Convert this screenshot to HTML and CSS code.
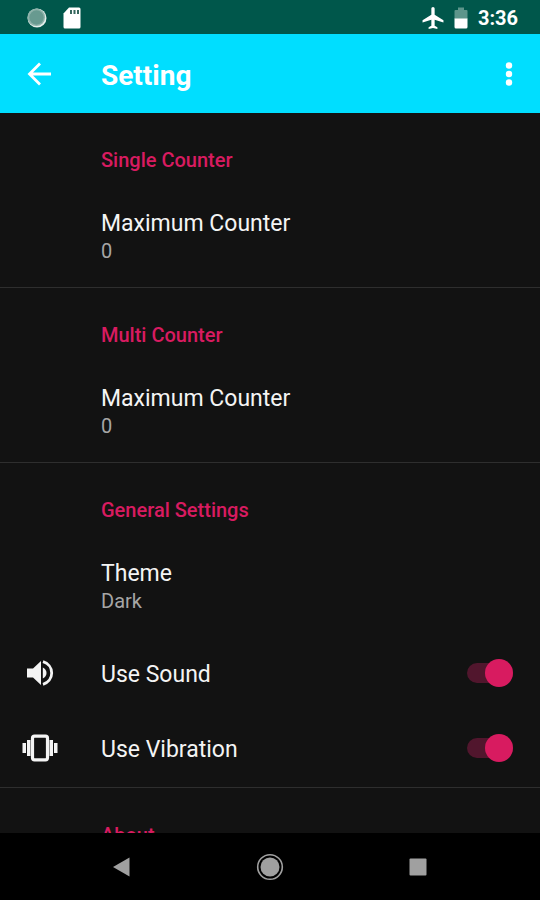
FILE: index.html
```html
<!DOCTYPE html>
<html lang="en">
<head>
<meta charset="utf-8">
<meta name="viewport" content="width=device-width, initial-scale=1">
<title>Setting</title>
<link rel="stylesheet" href="styles.css">
</head>
<body>
<div class="status">
  <svg width="20" height="20" viewBox="0 0 20 20" aria-hidden="true"><circle cx="10" cy="10" r="9.5" fill="#e4f0ed"/><circle cx="9.3" cy="9.3" r="8.8" fill="#8fb3ab"/><circle cx="9.5" cy="9.5" r="7.2" fill="#689a90"/></svg>
  <svg width="18" height="22" viewBox="0 0 18 22" aria-hidden="true"><path d="M6 .5h10a1.500 1.500 0 0 1 1.500 1.500v18a1.500 1.500 0 0 1-1.500 1.500H2A1.500 1.500 0 0 1 .5 20V6.500z" fill="#fff"/><path d="M7 3h2v4H7zM10.500 3h2v4h-2zM14 3h2v4h-2z" fill="#35675d"/></svg>
  <span class="spacer"></span>
  <svg width="22" height="22" viewBox="2 2 20 20" aria-hidden="true"><path d="M21.500 16v-2l-8-5V3.500c0-.83-.67-1.500-1.500-1.500s-1.500.67-1.500 1.500V9l-8 5v2l8-2.500V19l-2.500 1.500V22l4-1 4 1v-1.500L13.500 19v-5.500z" fill="#fff"/></svg>
  <svg class="battery" width="14" height="22" viewBox="0 0 14 22" aria-hidden="true"><path d="M4 .5h6V3h2.500a1 1 0 0 1 1 1v8H.5V4a1 1 0 0 1 1-1H4z" fill="#5d958b"/><path d="M.5 11.500h13V20a1.500 1.500 0 0 1-1.500 1.500H2A1.500 1.500 0 0 1 .5 20z" fill="#fff"/></svg>
  <time>3:36</time>
</div>
<header class="appbar">
  <button class="icon-button" type="button" aria-label="Back"><svg width="24" height="24" viewBox="0 0 24 24"><path d="M13 1.500 2.500 12 13 22.500M2.500 12H24" fill="none" stroke="#fff" stroke-width="2.800"/></svg></button>
  <h1>Setting</h1>
  <button class="icon-button" type="button" aria-label="More options"><svg width="8" height="24" viewBox="0 0 8 24"><g fill="#fff"><circle cx="4" cy="3.500" r="3.200"/><circle cx="4" cy="12" r="3.200"/><circle cx="4" cy="20.500" r="3.200"/></g></svg></button>
</header>
<main>
  <section>
    <h2>Single Counter</h2>
    <button class="row" type="button"><span class="title">Maximum Counter</span><span class="value">0</span></button>
  </section>
  <section>
    <h2>Multi Counter</h2>
    <button class="row" type="button"><span class="title">Maximum Counter</span><span class="value">0</span></button>
  </section>
  <section>
    <h2>General Settings</h2>
    <button class="row" type="button"><span class="title">Theme</span><span class="value">Dark</span></button>
    <div class="toggle">
      <span class="lead"><svg width="28" height="28" viewBox="0 0 28 28" aria-hidden="true"><path d="M1 9.500h6L15 2v24l-8-7.500H1z" fill="#f4f4f4"/><path d="M16.800 8.500c2.300 1 3.700 3 3.700 5.500s-1.400 4.500-3.700 5.500z" fill="#f4f4f4"/><path d="M17 2.700C22 4.200 25.700 8.500 25.700 14S22 23.800 17 25.300" fill="none" stroke="#f4f4f4" stroke-width="2.800"/></svg></span>
      <label for="sound">Use Sound</label>
      <input id="sound" type="checkbox" role="switch" checked>
    </div>
    <div class="toggle">
      <span class="lead"><svg width="36" height="28" viewBox="0 0 36 28" aria-hidden="true"><path d="M.5 9H4v10H.5zM5 6h3.500v16H5zM27.500 6H31v16h-3.500zM32 9h3.500v10H32z" fill="#f4f4f4"/><rect x="10.500" y="2.200" width="15" height="23.600" rx="2" fill="none" stroke="#f4f4f4" stroke-width="3.200"/></svg></span>
      <label for="vibration">Use Vibration</label>
      <input id="vibration" type="checkbox" role="switch" checked>
    </div>
  </section>
  <section>
    <h2>About</h2>
  </section>
</main>
<nav class="navbar" aria-label="System">
  <button type="button" aria-label="Back"><svg width="28" height="28" viewBox="0 0 28 28"><path d="M5 14 21.500 4.500v19z" fill="#a0a0a0"/></svg></button>
  <button type="button" aria-label="Home"><svg width="28" height="28" viewBox="0 0 28 28"><circle cx="14" cy="14" r="12.300" fill="none" stroke="#a0a0a0" stroke-width="1.600"/><circle cx="14" cy="14" r="9.500" fill="#a0a0a0"/></svg></button>
  <button type="button" aria-label="Recent apps"><svg width="28" height="28" viewBox="0 0 28 28"><rect x="5.500" y="5.500" width="17" height="17" rx="1" fill="#a0a0a0"/></svg></button>
</nav>
</body>
</html>
```
FILE: styles.css
```css
* { box-sizing: border-box; }

body {
  margin: 0;
  height: 100vh;
  display: flex;
  flex-direction: column;
  background: #121212;
  color: #f4f4f4;
  font-family: Roboto, "Liberation Sans", sans-serif;
}

button {
  margin: 0;
  padding: 0;
  border: 0;
  background: none;
  color: inherit;
  font: inherit;
  text-align: left;
}

svg { display: block; }

.status {
  flex: none;
  display: flex;
  align-items: center;
  gap: 16px;
  height: 34px;
  padding: 2px 22px 0 27px;
  background: #00574b;
  color: #fff;
  font-size: 20px;
  font-weight: 700;
}

.spacer { flex: 1; }

.battery { margin: 0 -6px; }

.appbar {
  flex: none;
  display: flex;
  align-items: center;
  height: 79px;
  padding: 0 27px;
  background: #00deff;
  color: #fff;
}

.appbar h1 {
  flex: 1;
  margin: 0 0 0 50px;
  padding-top: 4px;
  font-size: 28px;
  line-height: 32px;
  font-weight: 700;
}

main {
  flex: 1;
  min-height: 0;
  overflow: hidden;
}

section { border-bottom: 1px solid #2e2e2e; }

h2 {
  margin: 0;
  padding: 35px 24px 14px 101px;
  color: #d81b60;
  font-size: 20px;
  line-height: 24px;
  font-weight: 500;
}

.row {
  display: flex;
  flex-direction: column;
  width: 100%;
  padding: 24px 24px 22px 101px;
}

.title, label {
  font-size: 23px;
  line-height: 28px;
}

.value {
  color: #a6a6a6;
  font-size: 20px;
  line-height: 27px;
}

.toggle {
  display: flex;
  align-items: center;
  height: 75px;
  padding: 0 27px 3px 0;
}

.lead {
  display: flex;
  justify-content: center;
  width: 80px;
  margin-right: 21px;
}

label {
  flex: 1;
  padding-top: 3px;
}

input {
  appearance: none;
  display: flex;
  align-items: center;
  justify-content: flex-end;
  width: 46px;
  height: 20px;
  margin: 0;
  border-radius: 10px;
  background: #51162d;
}

input::before {
  content: "";
  flex: none;
  width: 28px;
  height: 28px;
  border-radius: 50%;
  background: #d81b60;
}

input:not(:checked) { justify-content: flex-start; }

.navbar {
  flex: none;
  display: flex;
  align-items: center;
  justify-content: center;
  gap: 120px;
  height: 67px;
  background: #000;
}
```
